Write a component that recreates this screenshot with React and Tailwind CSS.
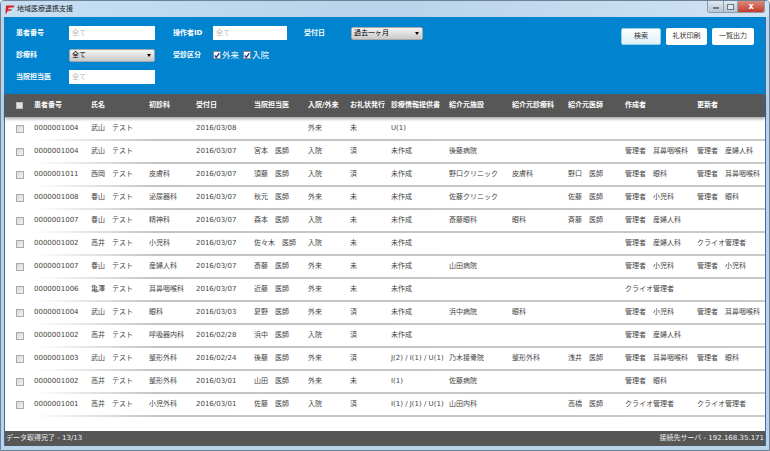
import React from 'react';

const rows = [
  ['0000001004', '武山　テスト', '', '2016/03/08', '', '外来', '未', 'U(1)', '', '', '', '', ''],
  ['0000001004', '武山　テスト', '', '2016/03/07', '宮本　医師', '入院', '済', '未作成', '後藤病院', '', '', '管理者　耳鼻咽喉科', '管理者　産婦人科'],
  ['0000001011', '西岡　テスト', '皮膚科', '2016/03/07', '須藤　医師', '入院', '済', '未作成', '野口クリニック', '皮膚科', '野口　医師', '管理者　眼科', '管理者　耳鼻咽喉科'],
  ['0000001008', '春山　テスト', '泌尿器科', '2016/03/07', '秋元　医師', '外来', '未', '未作成', '佐藤クリニック', '', '佐藤　医師', '管理者　小児科', '管理者　眼科'],
  ['0000001007', '春山　テスト', '精神科', '2016/03/07', '森本　医師', '入院', '未', '未作成', '斎藤眼科', '眼科', '斉藤　医師', '管理者　産婦人科', ''],
  ['0000001002', '高井　テスト', '小児科', '2016/03/07', '佐々木　医師', '入院', '未', '未作成', '', '', '', '管理者　産婦人科', 'クライオ管理者'],
  ['0000001007', '春山　テスト', '産婦人科', '2016/03/07', '斎藤　医師', '外来', '未', '未作成', '山田病院', '', '', '管理者　小児科', '管理者　小児科'],
  ['0000001006', '亀澤　テスト', '耳鼻咽喉科', '2016/03/07', '近藤　医師', '外来', '未', '未作成', '', '', '', 'クライオ管理者', ''],
  ['0000001004', '武山　テスト', '眼科', '2016/03/03', '夏野　医師', '外来', '済', '未作成', '浜中病院', '眼科', '', '管理者　小児科', '管理者　耳鼻咽喉科'],
  ['0000001002', '高井　テスト', '呼吸器内科', '2016/02/28', '浜中　医師', '入院', '済', '未作成', '', '', '', '管理者　産婦人科', ''],
  ['0000001003', '武山　テスト', '整形外科', '2016/02/24', '後藤　医師', '外来', '済', 'J(2) / I(1) / U(1)', '乃木接骨院', '整形外科', '浅井　医師', '管理者　耳鼻咽喉科', '管理者　眼科'],
  ['0000001002', '高井　テスト', '整形外科', '2016/03/01', '山田　医師', '外来', '未', 'I(1)', '佐藤病院', '', '', '管理者　眼科', ''],
  ['0000001001', '高井　テスト', '小児外科', '2016/03/01', '佐藤　医師', '入院', '済', 'I(1) / J(1) / U(1)', '山田内科', '', '高橋　医師', 'クライオ管理者', 'クライオ管理者'],
];

const headers = ['患者番号', '氏名', '初診科', '受付日', '当院担当医', '入院/外来', 'お礼状発行', '診療情報提供書', '紹介元施設', '紹介元診療科', '紹介元医師', '作成者', '更新者'];

const gridCols = 'grid grid-cols-[29px_57px_58px_47px_58px_54px_42px_41px_58px_63px_56px_57px_72px_68px]';

function Input({ className }) {
  return (
    <input
      placeholder="全て"
      className={`h-[14px] bg-white px-[3px] text-[7px] text-black outline-none placeholder:text-[#bbb] ${className}`}
    />
  );
}

function Select({ label, className }) {
  return (
    <div className={`flex items-center justify-between rounded-[2px] border border-[#a8a8a8] bg-linear-to-b from-[#f4f4f4] to-[#c9c9c9] pl-[2px] pr-[3px] text-[7px] text-black ${className}`}>
      <span>{label}</span>
      <span className="h-0 w-0 border-x-[2px] border-t-[3px] border-x-transparent border-t-black" />
    </div>
  );
}

function Check({ label }) {
  return (
    <div className="flex items-center gap-[1px]">
      <div className="flex h-[8px] w-[8px] items-center justify-center border border-[#888] bg-white">
        <svg viewBox="0 0 8 8" className="h-[7px] w-[7px]">
          <path d="M1 4l2 2.4L7 1" fill="none" stroke="#1f3f9a" strokeWidth="1.8" />
        </svg>
      </div>
      <span className="text-[8.5px] text-white">{label}</span>
    </div>
  );
}

function Label({ children }) {
  return <span className="text-[7px] font-bold text-white">{children}</span>;
}

function ActionButton({ children, className }) {
  return (
    <div className={`flex h-[17px] items-center justify-center rounded-[2px] bg-white text-[7px] text-[#333] ${className}`}>
      {children}
    </div>
  );
}

export default function App() {
  return (
    <div className="flex h-[451px] w-[770px] flex-col overflow-hidden rounded-t-[4px] border border-[#6d8196] bg-[#b8d4ed] font-['DejaVu_Sans','Noto_Sans_CJK_JP',sans-serif]">
      {/* title bar */}
      <div className="flex h-[16px] shrink-0 items-center justify-between bg-linear-to-r from-[#c6dff3] via-[#b8d3ea] to-[#cfe3f4]">
        <div className="flex items-center gap-[2px] pl-[4px]">
          <svg viewBox="0 0 10 10" className="h-[10px] w-[10px]">
            <path d="M1 1.5h8.5L8.5 3.5H4L2.8 5.2h4L6 6.8H2.6L1.6 9.5H0.4z" fill="#d8211c" />
          </svg>
          <span className="text-[7px] text-[#222]">地域医療連携支援</span>
        </div>
        <div className="mr-[4px] flex h-[12px] self-start overflow-hidden rounded-b-[3px] border border-t-0 border-[#8c9aa9]">
          <div className="flex w-[16px] items-end justify-center border-r border-[#94a3b4] bg-linear-to-b from-[#dfe9f2] to-[#b4c6d7] pb-[3px]">
            <div className="h-[2px] w-[6px] border border-[#777] bg-white" />
          </div>
          <div className="flex w-[14px] items-center justify-center border-r border-[#94a3b4] bg-linear-to-b from-[#dfe9f2] to-[#b4c6d7]">
            <div className="h-[6px] w-[7px] border border-[#777] bg-[#dfe8f0]" />
          </div>
          <div className="flex w-[26px] items-center justify-center bg-linear-to-b from-[#d98a7e] to-[#c2392c] text-[8px] leading-none font-bold text-white">
            x
          </div>
        </div>
      </div>

      <div className="mx-[3px] flex min-h-0 flex-1 flex-col border-x border-[#3a6ea5] bg-white">
        {/* search panel */}
        <div className="flex h-[77px] shrink-0 justify-between bg-[#0084cf] pt-[5px] pl-[11px]">
          <div className="grid grid-cols-[53px_86px_18px_40px_74px_17px_47px_72px] grid-rows-[22px_22px_22px] items-center">
            <Label>患者番号</Label>
            <Input className="w-[86px]" />
            <span />
            <Label>操作者ID</Label>
            <Input className="w-[74px]" />
            <span />
            <Label>受付日</Label>
            <Select label="過去一ヶ月" className="h-[13px]" />

            <Label>診療科</Label>
            <Select label="全て" className="h-[13px]" />
            <span />
            <Label>受診区分</Label>
            <div className="col-span-4 flex gap-[4px]">
              <Check label="外来" />
              <Check label="入院" />
            </div>

            <Label>当院担当医</Label>
            <Input className="w-[86px]" />
          </div>
          <div className="mt-[6px] mr-[11px] flex h-[17px] gap-[5px]">
            <ActionButton className="w-[40px] border border-[#8fd0e6] bg-linear-to-b from-white to-[#dcf1f8]">検索</ActionButton>
            <ActionButton className="w-[41px]">礼状印刷</ActionButton>
            <ActionButton className="w-[42px]">一覧出力</ActionButton>
          </div>
        </div>

        {/* table header */}
        <div className={`${gridCols} relative h-[23px] shrink-0 items-center bg-[#575757] shadow-[0_2px_3px_rgba(0,0,0,0.35)]`}>
          <div className="ml-[11px] h-[7px] w-[7px] border border-[#bbb] bg-[#e4e4e4]" />
          {headers.map((h, i) => (
            <span key={i} className="text-[7px] font-bold whitespace-nowrap text-white">{h}</span>
          ))}
        </div>

        {/* table body */}
        <div className="min-h-0 flex-1 overflow-hidden pt-[1px]">
          {rows.map((row, r) => (
            <div key={r} className="h-[23px]">
              <div className={`${gridCols} h-[21px] items-center`}>
                <div className="ml-[11px] h-[8px] w-[8px] border border-[#aaa] bg-linear-to-br from-[#d8d8d8] to-[#f4f4f4]" />
                {row.map((cell, i) => (
                  <span key={i} className="text-[7px] whitespace-nowrap text-[#444]">{cell}</span>
                ))}
              </div>
              <div className="h-[2px] bg-linear-to-r from-white from-[4%] via-[#c4c4c4] via-[20%] to-[#c8c8c8]" />
            </div>
          ))}
        </div>

        {/* status bar */}
        <div className="flex h-[15px] shrink-0 items-center justify-between bg-[#565656] px-[1px] text-[7px] text-[#eee]">
          <span>データ取得完了 - 13/13</span>
          <span>接続先サーバ - 192.168.35.171</span>
        </div>
      </div>
      <div className="h-[4px] shrink-0" />
    </div>
  );
}
